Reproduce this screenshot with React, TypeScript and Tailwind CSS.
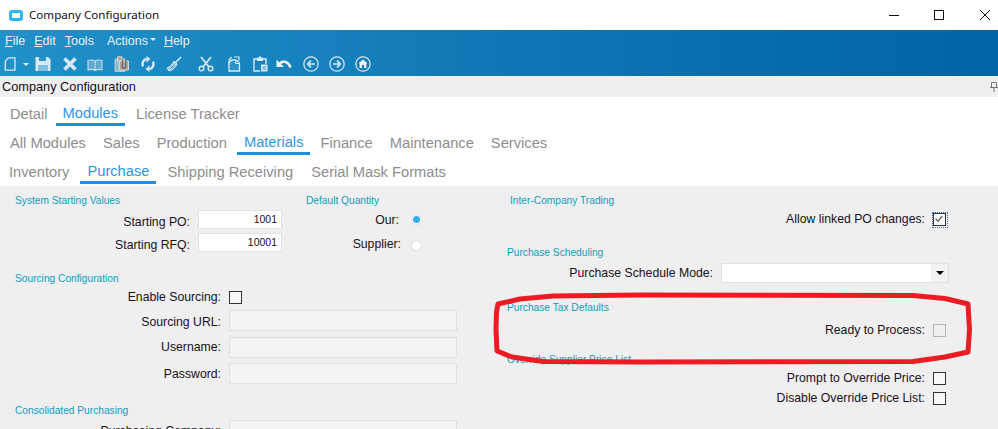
import React from 'react'

const tabBase = 'px-[7px] h-[26px] text-[14.7px] whitespace-nowrap'

function Tab({ label, active, className = '' }: { label: string; active?: boolean; className?: string }) {
  if (active) {
    return (
      <div className={`${tabBase} text-[#2b97e6] border-b-[3px] border-[#1b8fe3] leading-[26px] ${className}`}>{label}</div>
    )
  }
  return <div className={`${tabBase} text-[#8e8e8e] leading-[28px] ${className}`}>{label}</div>
}

function Heading({ children, className = '' }: { children: React.ReactNode; className?: string }) {
  return <div className={`h-[14px] leading-[16px] text-[10.2px] text-[#109cc0] whitespace-nowrap ${className}`}>{children}</div>
}

function Check({ gray, focus }: { gray?: boolean; focus?: boolean }) {
  return (
    <div className={`relative w-[13px] h-[13px] border shrink-0 ${gray ? 'border-[#b4b4b4] bg-[#efefef]' : 'border-[#333333] bg-[#f7f7f7]'}`}>
      {focus && <div className="absolute -inset-[2px] -right-[3px] -bottom-[3px] border border-dotted border-[#2d6fb5]" />}
      {focus && (
        <svg viewBox="0 0 13 13" className="absolute inset-0 w-[11px] h-[11px]" fill="none" stroke="#555" strokeWidth="1.4">
          <path d="M2 5.5 L4.8 8.6 L9.6 2.4" />
        </svg>
      )}
    </div>
  )
}

function Radio({ on }: { on?: boolean }) {
  return (
    <div className="w-[11px] h-[11px] rounded-full border border-[#dddddd] bg-white flex items-center justify-center">
      {on && <div className="w-[7px] h-[7px] rounded-full bg-[#2fb0f2]" />}
    </div>
  )
}

function CheckRow({ label, gray, focus, className = '' }: { label: string; gray?: boolean; focus?: boolean; className?: string }) {
  return (
    <div className={`flex items-center justify-end w-[439px] h-[13px] text-[12.25px] text-[#1b1020] ${className}`}>
      <span className="mr-[8px] whitespace-nowrap">{label}</span>
      <Check gray={gray} focus={focus} />
    </div>
  )
}

function NumberRow({ label, value, className = '' }: { label: string; value: string; className?: string }) {
  return (
    <div className={`flex items-center h-[19px] text-[12.25px] text-[#1b1020] ${className}`}>
      <div className="w-[175px] text-right mr-[8px] pt-[5px]">{label}</div>
      <div className="w-[84px] h-[19px] bg-white border border-[#e2e2e2] text-right pr-[4px] leading-[16px] text-[10.5px]">{value}</div>
    </div>
  )
}

function UrlRow({ label, className = '', textClass = 'pt-[2px]' }: { label: string; className?: string; textClass?: string }) {
  return (
    <div className={`flex items-center h-[21px] text-[12.25px] text-[#1b1020] ${className}`}>
      <div className={`w-[206px] text-right mr-[8px] whitespace-nowrap ${textClass}`}>{label}</div>
      <div className="w-[228px] h-[21px] bg-[#f4f4f4] border border-[#e0e0e0]" />
    </div>
  )
}

function Ico({ className = '', w = 16, children }: { className?: string; w?: number; children: React.ReactNode }) {
  return (
    <svg viewBox="0 0 16 16" width={w} height={16} className={`shrink-0 ${className}`} fill="none" stroke="#d6eaf5" strokeWidth="1.4">
      {children}
    </svg>
  )
}

function Toolbar() {
  return (
    <div className="flex items-center h-[18px] pl-[4px] mt-[4px]">
      <Ico w={14}>
        <path d="M5 1 H12.5 V15 H1.5 V5 Z" strokeWidth="1.5" />
      </Ico>
      <div className="ml-[5px] w-0 h-0 border-x-[3px] border-x-transparent border-t-[3px] border-t-[#e6f2f8]" />
      <Ico className="ml-[6px]">
        <path fill="#d6eaf5" stroke="none" d="M0.5 1 H13 L15.5 3.5 V15 H0.5 Z" />
        <path fill="#2a93c9" stroke="none" d="M4 1 H11 V5 H4 Z" />
        <path fill="#7fc0e2" stroke="none" d="M3 9 H13 V15 H3 Z" />
      </Ico>
      <Ico className="ml-[11px]">
        <path d="M2.5 2.5 L13.5 13.5 M13.5 2.5 L2.5 13.5" strokeWidth="3.6" />
      </Ico>
      <Ico className="ml-[9px]">
        <path fill="#5fa9d0" stroke="#c4deec" strokeWidth="1.1" d="M8 5 C6 3.8 3 3.8 1 4.6 V14 C3 13.3 6 13.3 8 14.5 C10 13.3 13 13.3 15 14 V4.6 C13 3.8 10 3.8 8 5 Z M8 5 V14.5" />
      </Ico>
      <Ico className="ml-[11px]">
        <path fill="#8fbdd6" stroke="#c9c4bb" strokeWidth="1" d="M1 3 H11 V15.5 H1 Z" />
        <path fill="#aaa49b" stroke="#d8d5cf" strokeWidth="1" d="M3.5 0.8 H8 V5 H3.5 Z M5.5 5 H14.5 V14 H5.5 Z" />
        <path stroke="#6d6a66" strokeWidth="1.2" d="M8.5 3.5 V11 A1.6 1.6 0 0 0 11.7 11 V3.5" />
      </Ico>
      <Ico className="ml-[10px]">
        <path d="M3 10.5 A5.6 5.6 0 0 1 6.5 2.8" strokeWidth="2.4" />
        <path d="M13 5.5 A5.6 5.6 0 0 1 9.5 13.2" strokeWidth="2.4" />
        <path fill="#d6eaf5" stroke="none" d="M6.5 0 L10.5 3 L6.5 6.4 Z M9.5 9.6 L9.5 16 L5.5 13 Z" />
      </Ico>
      <Ico className="ml-[10px]">
        <path strokeWidth="1.6" d="M15 1 L9.5 6.5" />
        <path fill="#a9d2e7" stroke="#d6eaf5" strokeWidth="1" d="M8 5 L11 8 C10 11 7 14 3 15 C2.5 13.5 1 13 1 12 C4 11 6.5 8 8 5 Z" />
        <path stroke="#3a98c9" strokeWidth="0.8" d="M4 13 L7.5 9 M6 13 L9 9.5" />
      </Ico>
      <Ico className="ml-[16px]">
        <path strokeWidth="1.7" d="M3 1 L11 11 M13 1 L5 11" />
        <circle cx="3.5" cy="12.5" r="2.3" />
        <circle cx="12.5" cy="12.5" r="2.3" />
      </Ico>
      <Ico className="ml-[12px]">
        <path d="M8 1 H13 V4.5 M5.5 1 L3 4 V9" strokeWidth="1.2" />
        <path fill="#2a93c9" d="M5.5 4 H10 L13.5 7 V15 H3 V7 Z" strokeWidth="1.3" />
        <path d="M9.5 4.5 V7.5 H13" strokeWidth="1" />
      </Ico>
      <Ico className="ml-[10px]">
        <path d="M5 3 H2 V15 H8 M11 3 H14 V8" strokeWidth="1.4" />
        <path fill="#d6eaf5" stroke="none" d="M5 1.5 H7 V0.5 H9 V1.5 H11 V5 H5 Z" />
        <path fill="#d6eaf5" stroke="none" d="M9 8.5 H15.5 V15.5 H9 Z" />
        <path stroke="#2a86bb" strokeWidth="0.9" d="M10.5 11 H14 M10.5 13 H14" />
      </Ico>
      <Ico className="ml-[8px]">
        <path stroke="#e9f4fa" strokeWidth="2.6" d="M3.5 8 C6 4.6 11.5 4.2 14.6 11.5" />
        <path fill="#e9f4fa" stroke="none" d="M0.5 3.5 L0.5 11 L8 11 Z" />
      </Ico>
      <Ico className="ml-[11px]">
        <circle cx="8" cy="8" r="7.2" strokeWidth="1.2" />
        <path d="M12 8 H5 M8 4.6 L4.6 8 L8 11.4" strokeWidth="1.7" />
      </Ico>
      <Ico className="ml-[10px]">
        <circle cx="8" cy="8" r="7.2" strokeWidth="1.2" />
        <path d="M4 8 H11 M8 4.6 L11.4 8 L8 11.4" strokeWidth="1.7" />
      </Ico>
      <Ico className="ml-[10px]">
        <circle cx="8" cy="8" r="7.2" strokeWidth="1.2" />
        <path fill="#e9f4fa" stroke="none" d="M8 3.4 L12.6 7.6 H11.4 V12 H9 V9 H7 V12 H4.6 V7.6 H3.4 Z" />
      </Ico>
    </div>
  )
}

export default function App() {
  return (
    <div className="relative w-[998px] h-[429px] overflow-hidden bg-[#efefef] font-['Liberation_Sans',Arial,sans-serif]">
      {/* Window title */}
      <div className="h-[30px] bg-white flex items-center pl-[9px]">
        <div className="w-[14px] h-[11px] rounded-[3px] bg-[#2bb8f1] flex items-center justify-center">
          <div className="w-[8px] h-[5px] rounded-[1px] bg-white" />
        </div>
        <span className="ml-[6px] text-[11.6px] text-[#101010] font-['Noto_Sans',sans-serif]">Company Configuration</span>
        <div className="ml-auto flex items-center">
          <svg width="101" height="12" viewBox="0 0 101 12" fill="none" stroke="#111" strokeWidth="1" className="mr-[8px]">
            <path d="M0 6.5 H10" />
            <rect x="45.5" y="1.5" width="9" height="9" />
            <path d="M91 1 L101 11 M101 1 L91 11" />
          </svg>
        </div>
      </div>

      {/* Menu + toolbar */}
      <div className="h-[46px] bg-gradient-to-r from-[#2191ca] via-[#0f78b4] to-[#0064a3] pt-[1px]">
        <div className="flex items-center h-[20px] text-[12.5px] text-[#e6f2f8] leading-none">
          <span className="ml-[5px]"><u>F</u>ile</span>
          <span className="ml-[9px]"><u>E</u>dit</span>
          <span className="ml-[9px]"><u>T</u>ools</span>
          <span className="ml-[13px] flex items-center">
            Actions
            <span className="ml-[2px] mb-[3px] w-0 h-0 border-x-[3px] border-x-transparent border-t-[3px] border-t-[#e6f2f8]" />
          </span>
          <span className="ml-[8px]"><u>H</u>elp</span>
        </div>
        <Toolbar />
      </div>

      {/* Page header */}
      <div className="h-[21px] flex items-center pl-[2px] text-[12.75px] text-[#141018] relative">
        Company Configuration
        <svg width="8" height="10" viewBox="0 0 8 10" fill="none" stroke="#777" className="absolute right-0 top-[6px]">
          <path d="M1.5 0.5 H6.5 V5.5 H1.5 Z M0 5.5 H8 M4 5.5 V10" />
        </svg>
      </div>

      {/* Tabs */}
      <div className="h-[89px] bg-white">
        <div className="flex h-[29px] pl-[3px] pt-[3px] gap-[4px]">
          <Tab label="Detail" />
          <Tab label="Modules" active className="-ml-[3px]" />
          <Tab label="License Tracker" />
        </div>
        <div className="flex h-[29px] pl-[3px] pt-[3px] gap-[3px]">
          <Tab label="All Modules" />
          <Tab label="Sales" />
          <Tab label="Production" />
          <Tab label="Materials" active />
          <Tab label="Finance" />
          <Tab label="Maintenance" />
          <Tab label="Services" />
        </div>
        <div className="flex h-[29px] pl-[2px] pt-[3px] gap-[4px]">
          <Tab label="Inventory" />
          <Tab label="Purchase" active />
          <Tab label="Shipping Receiving" />
          <Tab label="Serial Mask Formats" />
        </div>
      </div>

      {/* Form */}
      <div className="flex">
        <div className="w-[495px] shrink-0 pl-[15px] pt-[7px]">
          <div className="flex">
            <div className="w-[291px]">
              <Heading>System Starting Values</Heading>
              <NumberRow label="Starting PO:" value="1001" className="mt-[3px]" />
              <NumberRow label="Starting RFQ:" value="10001" className="mt-[4px]" />
            </div>
            <div className="w-[120px]">
              <Heading>Default Quantity</Heading>
              <div className="flex items-center h-[19px] mt-[3px] text-[12.25px] text-[#1b1020]">
                <div className="w-[93px] text-right pt-[2px]">Our:</div>
                <div className="ml-[12px]"><Radio on /></div>
              </div>
              <div className="flex items-center h-[19px] mt-[4px] text-[12.25px] text-[#1b1020]">
                <div className="w-[95px] text-right pt-[4px]">Supplier:</div>
                <div className="ml-[10px] mt-[5px]"><Radio /></div>
              </div>
            </div>
          </div>

          <Heading className="mt-[19px]">Sourcing Configuration</Heading>
          <div className="flex items-center h-[13px] mt-[6px] text-[12.25px] text-[#1b1020]">
            <div className="w-[206px] text-right mr-[8px]">Enable Sourcing:</div>
            <Check />
          </div>
          <UrlRow label="Sourcing URL:" className="mt-[6px]" textClass="pt-[3px]" />
          <UrlRow label="Username:" className="mt-[6px]" textClass="pt-0" />
          <UrlRow label="Password:" className="mt-[5px]" textClass="pt-[1px]" />

          <Heading className="mt-[19px]">Consolidated Purchasing</Heading>
          <UrlRow label="Purchasing Company:" className="mt-[3px]" />
        </div>

        <div className="w-[460px] shrink-0 pl-[12px] pt-[7px]">
          <Heading className="ml-[3px]">Inter-Company Trading</Heading>
          <CheckRow label="Allow linked PO changes:" focus className="mt-[6px]" />

          <Heading className="mt-[19px]">Purchase Scheduling</Heading>
          <div className="flex items-center h-[20px] mt-[4px] text-[12.25px] text-[#1b1020]">
            <div className="w-[206px] text-right mr-[8px] pt-[1px] whitespace-nowrap">Purchase Schedule Mode:</div>
            <div className="w-[228px] h-[20px] bg-white border border-[#e2e2e2] flex justify-end">
              <div className="w-[17px] bg-[#f2f2f2] flex items-center justify-center">
                <div className="w-0 h-0 border-x-[4px] border-x-transparent border-t-[4px] border-t-black" />
              </div>
            </div>
          </div>

          <Heading className="mt-[17px]">Purchase Tax Defaults</Heading>
          <CheckRow label="Ready to Process:" gray className="mt-[10px]" />

          <Heading className="mt-[15px]">Override Supplier Price List</Heading>
          <CheckRow label="Prompt to Override Price:" className="mt-[6px]" />
          <CheckRow label="Disable Override Price List:" className="mt-[7px]" />
        </div>
      </div>

      {/* Red annotation ellipse drawn over the form */}
      <svg className="absolute left-0 top-0 pointer-events-none" width="998" height="429" fill="none">
        <path
          d="M496.5 312 L498 304 L520 299 L553 296 L640 295 L913 295.5 L945 298.5 L968 304 L969.5 330 L968 352 L945 357 L913 361.5 L640 362 L543 361.5 L512 357 L497 351 L496 330 Z"
          stroke="#ed1c24"
          strokeWidth="5"
          strokeLinejoin="round"
        />
      </svg>
    </div>
  )
}
